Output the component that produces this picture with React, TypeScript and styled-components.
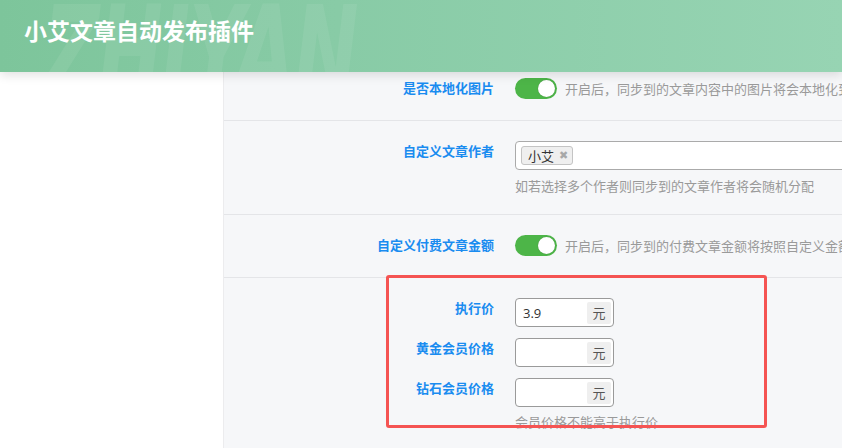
import React, { FC } from 'react';
import styled, { createGlobalStyle } from 'styled-components';

const GlobalStyle = createGlobalStyle`
  html, body {
    margin: 0;
    padding: 0;
    height: 448px;
    overflow: hidden;
    font-family: "Noto Sans CJK SC", "Noto Sans", sans-serif;
    line-height: 20px;
  }
  * {
    box-sizing: border-box;
  }
`;

const Page = styled.div`
  display: flex;
  flex-direction: column;
  width: 842px;
  height: 448px;
  overflow: hidden;
`;

const Header = styled.header`
  position: relative;
  display: flex;
  align-items: center;
  flex: 0 0 72px;
  height: 72px;
  padding: 0 0 12px 24px;
  overflow: hidden;
  background: linear-gradient(90deg, #7dc59b 0%, #88cba6 40%, #97d4b3 100%);
  box-shadow: 0 3px 10px rgba(0, 0, 0, 0.12);
  z-index: 2;
`;

const Title = styled.h1`
  position: relative;
  margin: 0;
  font-size: 23px;
  line-height: 30px;
  font-weight: 700;
  color: #fff;
  z-index: 1;
`;

const Watermark = styled.span`
  position: absolute;
  left: 44px;
  top: -10px;
  font-family: "DejaVu Sans", sans-serif;
  font-size: 124px;
  line-height: 124px;
  font-weight: 900;
  font-style: italic;
  letter-spacing: -2px;
  color: rgba(255, 255, 255, 0.07);
  white-space: nowrap;
  transform: scaleX(0.62);
  transform-origin: left top;
  pointer-events: none;
`;

const Body = styled.div`
  display: flex;
  flex: 1;
  min-height: 0;
`;

const Sidebar = styled.aside`
  flex: 0 0 224px;
  background: #fff;
  border-right: 1px solid #ececee;
`;

const Main = styled.main`
  position: relative;
  flex: 1;
  overflow: hidden;
  background: #f6f7f9;
`;

const Section = styled.section<{ $top: number; $bottom: number }>`
  padding: ${({ $top }) => $top}px 0 ${({ $bottom }) => $bottom}px;
  border-bottom: 1px solid #e4e5e8;
  &:last-child {
    border-bottom: none;
  }
`;

const FieldRow = styled.div`
  display: grid;
  grid-template-columns: 270px 1fr;
  column-gap: 21px;
  align-items: start;
  & + & {
    margin-top: 11px;
  }
`;

const Label = styled.label`
  text-align: right;
  font-size: 13px;
  font-weight: 700;
  line-height: 20px;
  color: #1a8cf0;
  white-space: nowrap;
`;

const Control = styled.div`
  display: flex;
  flex-direction: column;
  min-width: 0;
`;

const SwitchLine = styled.div`
  display: flex;
  align-items: center;
  gap: 8px;
  height: 21px;
  white-space: nowrap;
`;

const Switch = styled.span<{ $on?: boolean }>`
  position: relative;
  flex: 0 0 42px;
  width: 42px;
  height: 21px;
  border-radius: 11px;
  background: ${({ $on }) => ($on ? '#4db548' : '#ccc')};
  &::after {
    content: '';
    position: absolute;
    top: 2px;
    left: ${({ $on }) => ($on ? '23px' : '2px')};
    width: 17px;
    height: 17px;
    border-radius: 50%;
    background: #fff;
    box-shadow: 0 0 1px rgba(0, 0, 0, 0.3);
  }
`;

const Hint = styled.span`
  font-size: 13px;
  line-height: 20px;
  color: #9a9a9a;
  white-space: nowrap;
`;

const HelpText = styled(Hint)<{ $gap: number }>`
  display: block;
  margin-top: ${({ $gap }) => $gap}px;
`;

const TagSelect = styled.div`
  display: flex;
  align-items: center;
  height: 29px;
  width: 360px;
  padding: 0 5px;
  background: #fff;
  border: 1px solid #aaa;
  border-radius: 4px;
`;

const Tag = styled.span`
  display: inline-flex;
  align-items: center;
  gap: 5px;
  height: 19px;
  padding: 0 4px 0 6px;
  font-size: 13px;
  color: #333;
  background: #efefef;
  border: 1px solid #c4c4c4;
  border-radius: 3px;
`;

const TagClose = styled.span`
  font-size: 11px;
  font-weight: 700;
  color: #a8a8a8;
  font-family: "DejaVu Sans", sans-serif;
`;

const PriceBox = styled.div`
  display: flex;
  align-items: center;
  justify-content: space-between;
  width: 99px;
  height: 29px;
  padding: 0 2px 0 7px;
  background: #fff;
  border: 1px solid #9a9a9a;
  border-radius: 4px;
`;

const PriceValue = styled.span`
  font-family: "Open Sans", "Noto Sans", sans-serif;
  font-size: 13px;
  color: #333;
`;

const Unit = styled.span`
  display: flex;
  align-items: center;
  justify-content: center;
  width: 24px;
  height: 22px;
  font-size: 13px;
  color: #555;
  background: #efefef;
  border-radius: 2px;
`;

const Highlight = styled.div`
  position: absolute;
  left: 162px;
  top: 203px;
  width: 381px;
  height: 153px;
  border: 3px solid #f55453;
  border-radius: 3px;
  pointer-events: none;
`;

interface PriceFieldProps {
  label: string;
  value?: string;
}

const PriceField: FC<PriceFieldProps> = ({ label, value }) => (
  <FieldRow>
    <Label>{label}</Label>
    <Control>
      <PriceBox>
        <PriceValue>{value}</PriceValue>
        <Unit>元</Unit>
      </PriceBox>
    </Control>
  </FieldRow>
);

const App: FC = () => {
  return (
    <>
      <GlobalStyle />
      <Page>
        <Header>
          <Watermark>ZHIYAN</Watermark>
          <Title>小艾文章自动发布插件</Title>
        </Header>
        <Body>
          <Sidebar />
          <Main>
            <Section $top={6} $bottom={21}>
              <FieldRow>
                <Label>是否本地化图片</Label>
                <SwitchLine>
                  <Switch $on />
                  <Hint>开启后，同步到的文章内容中的图片将会本地化到服务器</Hint>
                </SwitchLine>
              </FieldRow>
            </Section>
            <Section $top={20} $bottom={18}>
              <FieldRow>
                <Label>自定义文章作者</Label>
                <Control>
                  <TagSelect>
                    <Tag>
                      小艾
                      <TagClose>✖</TagClose>
                    </Tag>
                  </TagSelect>
                  <HelpText $gap={6}>如若选择多个作者则同步到的文章作者将会随机分配</HelpText>
                </Control>
              </FieldRow>
            </Section>
            <Section $top={20} $bottom={21}>
              <FieldRow>
                <Label>自定义付费文章金额</Label>
                <SwitchLine>
                  <Switch $on />
                  <Hint>开启后，同步到的付费文章金额将按照自定义金额设置</Hint>
                </SwitchLine>
              </FieldRow>
            </Section>
            <Section $top={20} $bottom={20}>
              <PriceField label="执行价" value="3.9" />
              <PriceField label="黄金会员价格" />
              <PriceField label="钻石会员价格" />
              <FieldRow>
                <span />
                <HelpText $gap={-6}>会员价格不能高于执行价</HelpText>
              </FieldRow>
            </Section>
            <Highlight />
          </Main>
        </Body>
      </Page>
    </>
  );
};

export default App;
